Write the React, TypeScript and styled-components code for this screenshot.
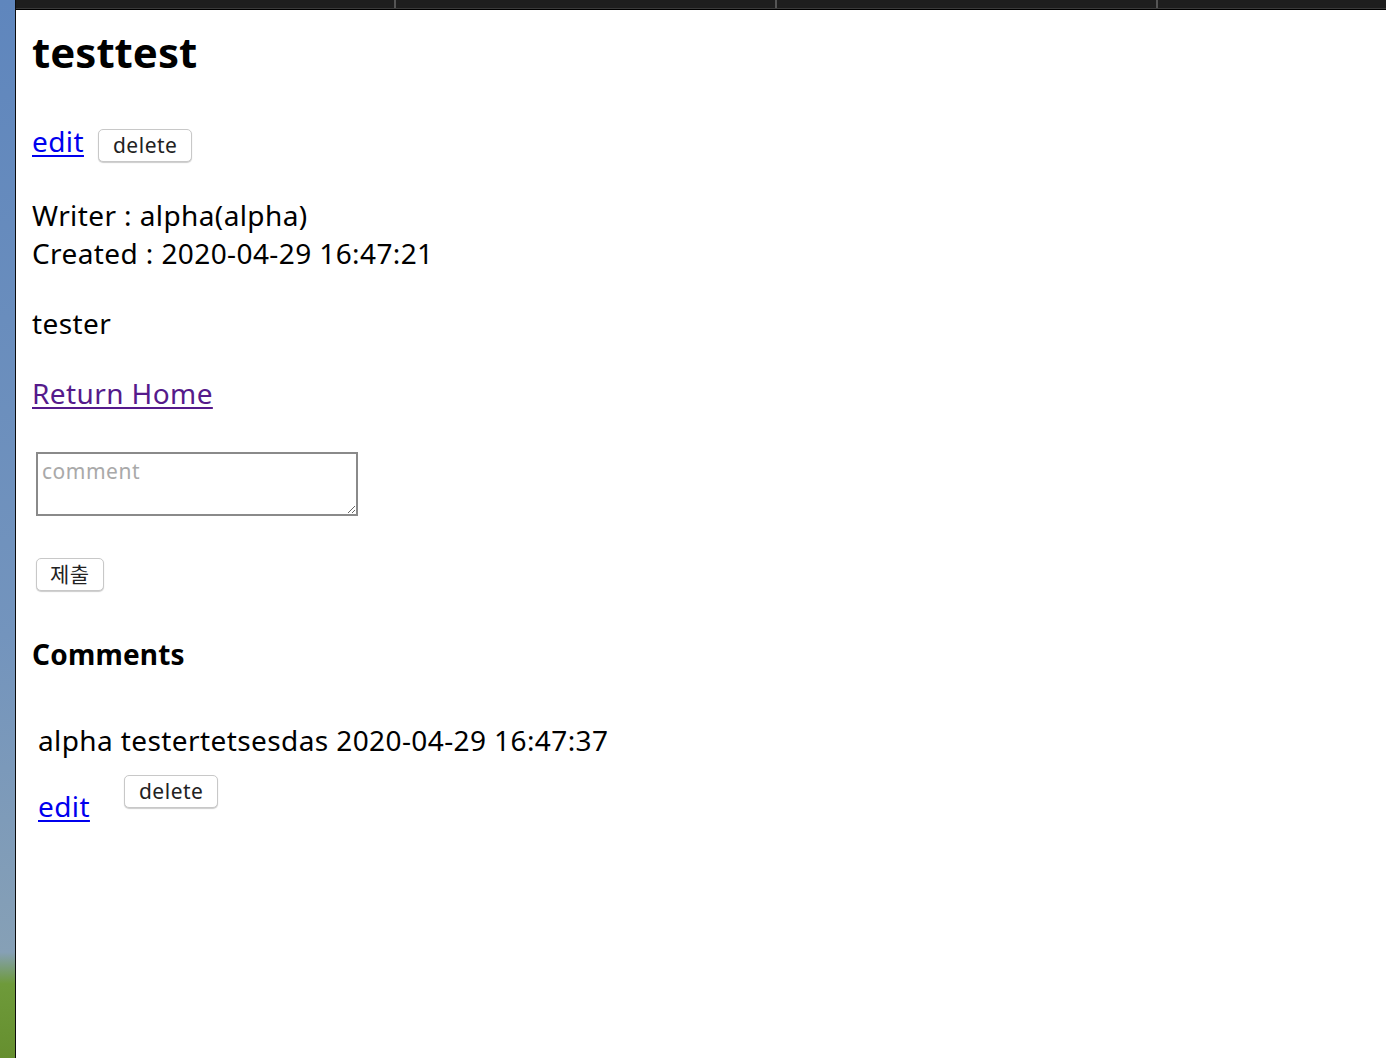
import React from "react";
import styled, { createGlobalStyle } from "styled-components";

const Global = createGlobalStyle`
  html, body { margin: 0; padding: 0; background: #fff; }
  body { font-family: "Noto Sans", "Noto Sans CJK KR", sans-serif; color: #000; }
`;

const Frame = styled.div`
  display: flex;
  width: 1386px;
  height: 1058px;
  overflow: hidden;
`;

const Desktop = styled.div`
  width: 15px;
  flex: none;
  background: linear-gradient(180deg, #5f86bd 0%, #7394bd 60%, #86a0b6 90%, #6e9a3a 93%, #668f2f 100%);
  border-right: 1px solid #0d0d0d;
`;

const Window = styled.div`
  flex: 1;
  display: flex;
  flex-direction: column;
  min-width: 0;
`;

const TabBar = styled.div`
  display: flex;
  height: 8px;
  background: #1e1e1e;
  border-bottom: 1px solid #3a3a3a;
  box-shadow: 0 1px 0 #000;
  margin-bottom: 1px;
`;

const Tab = styled.div<{ $w: number }>`
  width: ${(p) => p.$w}px;
  flex: none;
  border-right: 2px solid #555;
`;

const Content = styled.main`
  padding: 18px 16px;
  font-size: 28px;
  line-height: 38px;
  letter-spacing: 0.4px;
`;

const Title = styled.h1`
  font-size: 42px;
  line-height: 48px;
  font-weight: 700;
  letter-spacing: 0;
  margin: 0 0 46px;
`;

const Actions = styled.div<{ $gap?: number }>`
  display: flex;
  align-items: flex-start;
  gap: ${(p) => p.$gap ?? 14}px;
`;

const Link = styled.a<{ $visited?: boolean; $offset?: number }>`
  color: ${(p) => (p.$visited ? "#551a8b" : "#0000ee")};
  text-decoration: underline;
  text-underline-offset: 3px;
  cursor: pointer;
  margin-top: ${(p) => p.$offset ?? 0}px;
`;

const Button = styled.button<{ $offset?: number }>`
  font-family: "Noto Sans", "Noto Sans CJK KR", sans-serif;
  font-size: 21px;
  line-height: 28px;
  letter-spacing: 0.5px;
  color: #222;
  background: #fff;
  border: 1px solid #c8c8c8;
  border-radius: 5px;
  box-shadow: 0 1px 1px rgba(0, 0, 0, 0.2);
  padding: 1px 14px 2px;
  margin-top: ${(p) => p.$offset ?? 0}px;
`;

const Meta = styled.div`
  margin-top: 34px;
`;

const Body = styled.p`
  margin: 32px 0 0;
`;

const Home = styled.p`
  margin: 32px 0 0;
`;

const Form = styled.form`
  margin: 40px 0 0 4px;
  display: flex;
  flex-direction: column;
  align-items: flex-start;
  gap: 42px;
`;

const TextArea = styled.textarea`
  width: 310px;
  height: 58px;
  box-sizing: content-box;
  border: 2px solid #8a8a8a;
  padding: 2px 4px 0;
  margin: 0;
  font-family: "Noto Sans", "Noto Sans CJK KR", sans-serif;
  font-size: 21px;
  line-height: 30px;
  letter-spacing: 0.5px;
  &::placeholder { color: #a9a9a9; }
`;

const SubmitButton = styled(Button)`
  padding: 1px 13px 2px;
`;

const SectionTitle = styled.h3`
  font-size: 28px;
  line-height: 40px;
  font-weight: 700;
  letter-spacing: 0.2px;
  margin: 43px 0 0;
`;

const CommentList = styled.div`
  margin: 47px 0 0 6px;
`;

const CommentText = styled.div``;

export default function App() {
  return (
    <>
      <Global />
      <Frame>
        <Desktop />
        <Window>
          <TabBar>
            <Tab $w={378} />
            <Tab $w={379} />
            <Tab $w={379} />
          </TabBar>
          <Content>
            <Title>testtest</Title>
            <Actions>
              <Link>edit</Link>
              <Button $offset={7}>delete</Button>
            </Actions>
            <Meta>
              <div>Writer : alpha(alpha)</div>
              <div>Created : 2020-04-29 16:47:21</div>
            </Meta>
            <Body>tester</Body>
            <Home>
              <Link $visited>Return Home</Link>
            </Home>
            <Form onSubmit={(e) => e.preventDefault()}>
              <TextArea placeholder="comment" />
              <SubmitButton type="submit">제출</SubmitButton>
            </Form>
            <SectionTitle>Comments</SectionTitle>
            <CommentList>
              <CommentText>alpha testertetsesdas 2020-04-29 16:47:37</CommentText>
              <Actions $gap={34}>
                <Link $offset={28}>edit</Link>
                <Button $offset={16}>delete</Button>
              </Actions>
            </CommentList>
          </Content>
        </Window>
      </Frame>
    </>
  );
}
